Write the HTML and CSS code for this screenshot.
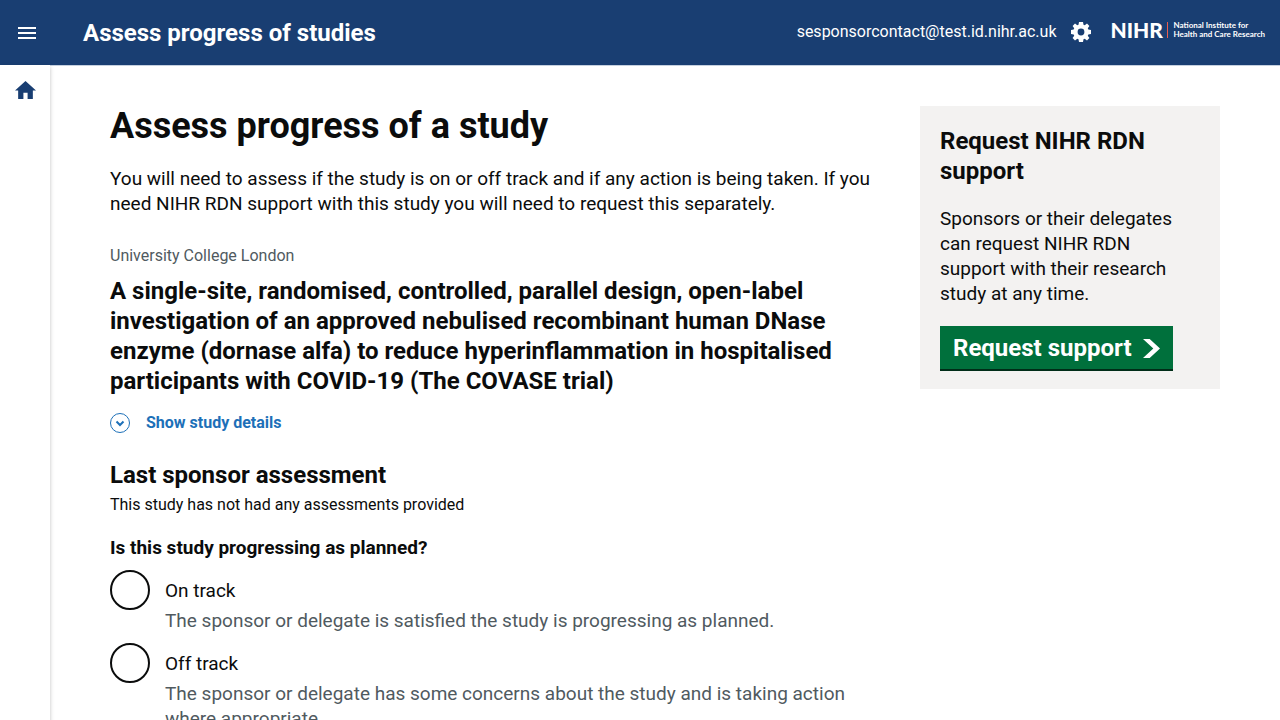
FILE: index.html
```html
<!DOCTYPE html>
<html lang="en">
<head>
<meta charset="utf-8">
<meta name="viewport" content="width=device-width, initial-scale=1">
<title>Assess progress of studies</title>
<link rel="stylesheet" href="styles.css">
</head>
<body>
<header class="header">
  <button class="icon-button menu-button" type="button" aria-label="Menu">
    <svg width="18" height="12" viewBox="0 0 18 12" aria-hidden="true"><path fill="currentColor" d="M0 0h18v2H0zM0 5h18v2H0zM0 10h18v2H0z"/></svg>
  </button>
  <div class="service-name">Assess progress of studies</div>
  <div class="account">
    <span class="email">sesponsorcontact@test.id.nihr.ac.uk</span>
    <button class="icon-button" type="button" aria-label="Settings">
      <svg width="20" height="20" viewBox="0 0 20 20" aria-hidden="true"><path fill="currentColor" fill-rule="evenodd" d="M8 0h4l.5 2.700 1.200.5L16 1.600 18.400 4l-1.600 2.300.5 1.200L20 8v4l-2.700.5-.5 1.200L18.400 16 16 18.400l-2.300-1.600-1.200.5L12 20H8l-.5-2.700-1.200-.5L4 18.400 1.600 16l1.600-2.300-.5-1.200L0 12V8l2.700-.5.5-1.200L1.600 4 4 1.600l2.300 1.600 1.200-.5zM10 6.600a3.400 3.400 0 1 0 0 6.800a3.400 3.400 0 0 0 0-6.800z"/></svg>
    </button>
    <a class="logo" href="#" aria-label="NIHR home">
      <span class="logo-mark">NIHR</span>
      <span class="logo-divider"></span>
      <span class="logo-name">National Institute for<br>Health and Care Research</span>
    </a>
  </div>
</header>
<div class="shell">
  <nav class="side-nav" aria-label="Main">
    <a class="home-link" href="#" aria-label="Home">
      <svg width="21" height="18" viewBox="0 0 20 17" aria-hidden="true"><path fill="currentColor" d="M8 17v-6h4v6h5V9h3L10 0 0 9h3v8z"/></svg>
    </a>
  </nav>
  <div class="page">
    <main class="content">
      <h1 class="title">Assess progress of a study</h1>
      <p class="intro">You will need to assess if the study is on or off track and if any action is being taken. If you need NIHR RDN support with this study you will need to request this separately.</p>
      <div class="organisation">University College London</div>
      <h2 class="heading study-title">A single-site, randomised, controlled, parallel design, open-label investigation of an approved nebulised recombinant human DNase enzyme (dornase alfa) to reduce hyperinflammation in hospitalised participants with COVID-19 (The COVASE trial)</h2>
      <button class="details-toggle" type="button" aria-expanded="false">
        <svg width="20" height="20" viewBox="0 0 20 20" fill="none" stroke="currentColor" aria-hidden="true"><circle cx="10" cy="10" r="9.500"/><path stroke-width="2" d="M6.500 8.500L10 12l3.500-3.500"/></svg>
        <span>Show study details</span>
      </button>
      <h3 class="heading">Last sponsor assessment</h3>
      <p class="assessment">This study has not had any assessments provided</p>
      <fieldset class="fieldset">
        <legend class="legend">Is this study progressing as planned?</legend>
        <div class="option">
          <input class="radio" type="radio" name="status" id="on-track" aria-describedby="on-track-hint">
          <label class="label" for="on-track">On track</label>
          <div class="hint" id="on-track-hint">The sponsor or delegate is satisfied the study is progressing as planned.</div>
        </div>
        <div class="option">
          <input class="radio" type="radio" name="status" id="off-track" aria-describedby="off-track-hint">
          <label class="label" for="off-track">Off track</label>
          <div class="hint" id="off-track-hint">The sponsor or delegate has some concerns about the study and is taking action where appropriate.</div>
        </div>
      </fieldset>
    </main>
    <aside class="support">
      <h2 class="heading">Request NIHR RDN support</h2>
      <p class="support-text">Sponsors or their delegates can request NIHR RDN support with their research study at any time.</p>
      <a class="support-button" href="#">
        <span>Request support</span>
        <svg width="17" height="19" viewBox="0 0 33 40" preserveAspectRatio="none" aria-hidden="true"><path fill="currentColor" d="M0 0h13l20 20-20 20H0l20-20z"/></svg>
      </a>
    </aside>
  </div>
</div>
</body>
</html>
```
FILE: styles.css
```css
* { box-sizing: border-box; }

body {
  margin: 0;
  min-height: 100vh;
  display: flex;
  flex-direction: column;
  background: #fff;
  color: #0b0c0c;
  font: 19px/25px Roboto, "Liberation Sans", sans-serif;
}

h1, h2, h3, p { margin: 0; }

.header {
  display: flex;
  align-items: center;
  height: 66px;
  padding: 0 15px 0 18px;
  background: #193e72;
  border-bottom: 1px solid #c5d0df;
  color: #fff;
}

.icon-button {
  display: flex;
  padding: 0;
  border: 0;
  background: none;
  color: inherit;
  cursor: pointer;
}

.service-name {
  margin-left: 47px;
  font-size: 24px;
  line-height: 30px;
  font-weight: 700;
}

.account {
  display: flex;
  align-items: center;
  gap: 15px;
  margin-left: auto;
  padding-bottom: 2px;
}

.email { font-size: 16px; line-height: 20px; }

.logo {
  display: flex;
  align-items: center;
  gap: 5px;
  margin-left: 4px;
  padding-bottom: 3px;
  color: #fff;
  font-family: Lato, sans-serif;
  text-decoration: none;
}

.logo-mark {
  width: 52px;
  font-size: 21px;
  line-height: 16px;
  font-weight: 900;
}

.logo-divider {
  width: 1px;
  height: 16px;
  background: #ea5d4e;
}

.logo-name {
  font-size: 8px;
  line-height: 9px;
  font-weight: 700;
  white-space: nowrap;
}

.shell { display: flex; flex: 1; }

.side-nav {
  flex: 0 0 50px;
  margin-top: -1px;
  padding-top: 16px;
  background: #fff;
  box-shadow: 0 2px 4px rgba(0, 0, 0, 0.25);
}

.home-link {
  display: flex;
  justify-content: center;
  color: #193e72;
}

.page {
  flex: 1;
  display: grid;
  grid-template-columns: minmax(0, 1fr) 300px;
  align-items: start;
  gap: 40px;
  padding: 40px 60px;
}

.title { font-size: 36px; line-height: 40px; }

.intro { margin: 20px 0 30px; }

.organisation {
  margin-bottom: 10px;
  color: #505a5f;
  font-size: 16px;
  line-height: 20px;
}

.heading { font-size: 24px; line-height: 30px; }

.details-toggle {
  display: flex;
  align-items: center;
  gap: 16px;
  margin: 17px 0 27px;
  padding: 0;
  border: 0;
  background: none;
  color: #1d70b8;
  font: 700 16px/20px Roboto, "Liberation Sans", sans-serif;
  cursor: pointer;
}

.assessment {
  margin: 5px 0 20px;
  font-size: 16px;
  line-height: 20px;
}

.fieldset {
  margin: 0;
  padding: 0;
  border: 0;
}

.legend {
  margin-bottom: 10px;
  padding: 0;
  font-weight: 700;
}

.option {
  display: grid;
  grid-template-columns: 40px minmax(0, 1fr);
  grid-template-rows: 38px auto;
  column-gap: 15px;
  margin-bottom: 10px;
}

.radio {
  appearance: none;
  width: 40px;
  height: 40px;
  margin: 0;
  border: 2px solid #0b0c0c;
  border-radius: 50%;
  background: #fff;
}

.radio:checked { box-shadow: inset 0 0 0 8px #fff; background: #0b0c0c; }

.label { padding-top: 8px; }

.hint { grid-column: 2; color: #505a5f; }

.support {
  padding: 20px 20px 18px;
  background: #f3f2f1;
}

.support-text { margin: 20px 0; }

.support-button {
  display: flex;
  align-items: center;
  gap: 11px;
  width: fit-content;
  height: 45px;
  padding: 2px 13px 0;
  border-bottom: 2px solid #002d18;
  background: #00703c;
  color: #fff;
  font-size: 24px;
  font-weight: 700;
  text-decoration: none;
}
```
